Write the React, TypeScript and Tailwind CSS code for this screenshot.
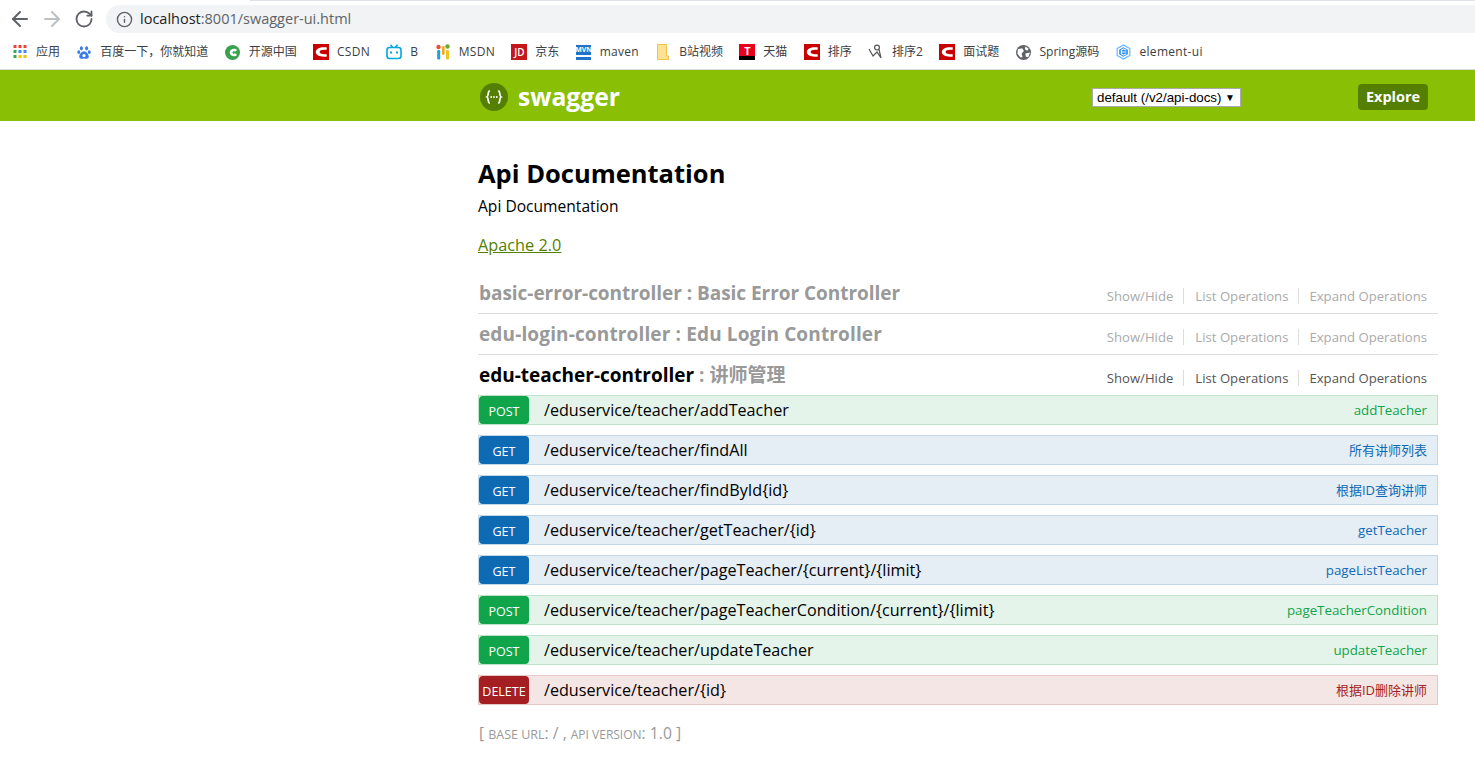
import { ArrowLeft, ArrowRight, Info, RotateCw } from "lucide-react";
import type { ReactNode } from "react";

const CsdnIcon = () => (
  <svg width="16" height="16" viewBox="0 0 16 16">
    <rect width="16" height="16" fill="#c90000" />
    <path d="M14 3.6 C8 2.6 2.8 4.6 2.8 8 C2.8 11.4 8 13.4 14 12.4 L13.4 10 C9.6 10.6 6.6 9.6 6.6 8 C6.6 6.4 9.6 5.4 13.4 6 Z" fill="#fff" />
  </svg>
);

const bookmarks: { label: string; icon: ReactNode }[] = [
  {
    label: "应用",
    icon: (
      <svg width="14" height="14" viewBox="0 0 14 14">
        <rect x="0.5" y="0" width="3" height="3" fill="#ea4335" />
        <rect x="5.5" y="0" width="3" height="3" fill="#ea4335" />
        <rect x="10.5" y="0" width="3" height="3" fill="#ea4335" />
        <rect x="0.5" y="5" width="3" height="3" fill="#34a853" />
        <rect x="5.5" y="5" width="3" height="3" fill="#4285f4" />
        <rect x="10.5" y="5" width="3" height="3" fill="#4285f4" />
        <rect x="0.5" y="10" width="3" height="3" fill="#34a853" />
        <rect x="5.5" y="10" width="3" height="3" fill="#fbbc04" />
        <rect x="10.5" y="10" width="3" height="3" fill="#fbbc04" />
      </svg>
    ),
  },
  {
    label: "百度一下，你就知道",
    icon: (
      <svg width="14" height="15" viewBox="0 0 16 16" fill="#3b7de8">
        <ellipse cx="5" cy="3.2" rx="1.7" ry="2.4" />
        <ellipse cx="11" cy="3.2" rx="1.7" ry="2.4" />
        <ellipse cx="2" cy="7.5" rx="1.7" ry="2.2" />
        <ellipse cx="14" cy="7.5" rx="1.7" ry="2.2" />
        <path d="M8 6.5 C5.5 6.5 2.5 10 2.5 12.8 C2.5 15.6 6 15.2 8 14.8 C10 15.2 13.5 15.6 13.5 12.8 C13.5 10 10.5 6.5 8 6.5 Z" />
        <circle cx="8" cy="11.5" r="1.8" fill="#fff" />
      </svg>
    ),
  },
  {
    label: "开源中国",
    icon: (
      <svg width="15" height="15" viewBox="0 0 16 16">
        <circle cx="8" cy="8" r="8" fill="#37a24b" />
        <path d="M13 5.4 C10.5 3 5 4 5 8 C5 12 10.5 13 13 10.6 L10.8 8.9 C9.6 9.8 8 9.4 8 8 C8 6.6 9.6 6.2 10.8 7.1 Z" fill="#fff" />
      </svg>
    ),
  },
  { label: "CSDN", icon: <CsdnIcon /> },
  {
    label: "B",
    icon: (
      <svg width="16" height="16" viewBox="0 0 16 16" fill="none" stroke="#00a8e0" strokeWidth="1.6">
        <rect x="1" y="3.5" width="14" height="11" rx="2.5" />
        <path d="M4.5 0.8 L6.5 3.2 M11.5 0.8 L9.5 3.2" />
        <path d="M5 7.5 V9.5 M11 7.5 V9.5" strokeWidth="2" />
      </svg>
    ),
  },
  {
    label: "MSDN",
    icon: (
      <svg width="14" height="16" viewBox="0 0 14 16">
        <circle cx="2.5" cy="3" r="2.2" fill="#e8503a" />
        <circle cx="11.5" cy="2.5" r="2.2" fill="#6aaa2d" />
        <rect x="1.2" y="6" width="3" height="9.5" rx="1.2" fill="#1ea0dc" />
        <rect x="6" y="2" width="2.6" height="9" rx="1.2" fill="#f3a81c" />
        <rect x="10" y="6" width="3" height="9.5" rx="1.2" fill="#f3c21c" />
      </svg>
    ),
  },
  {
    label: "京东",
    icon: (
      <div className="flex h-4 w-4 items-center justify-center bg-[#c4161c] text-[10px] font-semibold leading-none text-white">JD</div>
    ),
  },
  {
    label: "maven",
    icon: (
      <div className="flex h-[15px] w-[15px] flex-col">
        <div className="flex h-[10px] items-center justify-center bg-[#1f73c9] text-[7px] font-bold leading-none text-white">MVN</div>
        <div className="mt-[2px] h-[3px] bg-[#1f73c9]" />
      </div>
    ),
  },
  {
    label: "B站视频",
    icon: (
      <svg width="12" height="16" viewBox="0 0 12 16">
        <path d="M0.5 0.5 H9.5 V12 H11.5 V15.5 H0.5 Z" fill="#fde293" stroke="#f0c14b" />
      </svg>
    ),
  },
  {
    label: "天猫",
    icon: (
      <div className="flex h-4 w-4 flex-col bg-black">
        <div className="flex h-3 items-center justify-center bg-[#e8001c] text-[11px] font-bold leading-none text-white">T</div>
      </div>
    ),
  },
  { label: "排序", icon: <CsdnIcon /> },
  {
    label: "排序2",
    icon: (
      <svg width="16" height="16" viewBox="0 0 16 16" fill="none" stroke="#555" strokeWidth="1.2">
        <circle cx="9" cy="3.6" r="2.4" />
        <path d="M1 5 L5 12 L9 8 L13 14 L11 5.5" />
      </svg>
    ),
  },
  { label: "面试题", icon: <CsdnIcon /> },
  {
    label: "Spring源码",
    icon: (
      <svg width="15" height="15" viewBox="0 0 16 16">
        <circle cx="8" cy="8" r="8" fill="#5f6368" />
        <path d="M2 4.5 L6.5 3.5 L8.5 6.5 L6 9 L7 13 L4.5 13 L1.5 9 Z M10 1.5 L13.5 4 L12 6 L9.5 4.5 Z M10 9 L15 8 L13 13 L10.5 12.5 Z" fill="#fff" />
      </svg>
    ),
  },
  {
    label: "element-ui",
    icon: (
      <svg width="15" height="16" viewBox="0 0 16 17">
        <path d="M8 1 L14.8 4.8 V12.2 L8 16 L1.2 12.2 V4.8 Z" fill="#fff" stroke="#5cb4ff" strokeWidth="1.2" />
        <path d="M8 3.4 L12.6 6 V11 L8 13.6 L3.4 11 V6 Z" fill="#1f8ceb" />
        <path d="M11 6.6 L8 5.2 L5.6 6.6 V10.4 L8 11.8 L11 10.4 M6 8.5 H11" fill="none" stroke="#fff" strokeWidth="1.1" />
      </svg>
    ),
  },
];

const operations = [
  { method: "POST", path: "/eduservice/teacher/addTeacher", summary: "addTeacher" },
  { method: "GET", path: "/eduservice/teacher/findAll", summary: "所有讲师列表" },
  { method: "GET", path: "/eduservice/teacher/findById{id}", summary: "根据ID查询讲师" },
  { method: "GET", path: "/eduservice/teacher/getTeacher/{id}", summary: "getTeacher" },
  { method: "GET", path: "/eduservice/teacher/pageTeacher/{current}/{limit}", summary: "pageListTeacher" },
  { method: "POST", path: "/eduservice/teacher/pageTeacherCondition/{current}/{limit}", summary: "pageTeacherCondition" },
  { method: "POST", path: "/eduservice/teacher/updateTeacher", summary: "updateTeacher" },
  { method: "DELETE", path: "/eduservice/teacher/{id}", summary: "根据ID删除讲师" },
];

const methodStyles: Record<string, { row: string; badge: string; text: string }> = {
  POST: { row: "bg-[#e5f4ea] border-[#bfe3cc]", badge: "bg-[#10a54a]", text: "text-[#10a54a]" },
  GET: { row: "bg-[#e5edf5] border-[#c3d7e9]", badge: "bg-[#0f6ab4]", text: "text-[#0f6ab4]" },
  DELETE: { row: "bg-[#f5e6e6] border-[#e8c6c7]", badge: "bg-[#a41e22]", text: "text-[#a41e22]" },
};

const isLatin = (s: string) => /^[\x00-\x7f]+$/.test(s);

const Resource = ({ name, desc, active, spacing = "" }: { name: string; desc: string; active?: boolean; spacing?: string }) => {
  const linkColor = active ? "text-[#555555]" : "text-[#aaaaaa]";
  return (
    <div className={`flex items-center justify-between pl-px pr-[11px] ${active ? "h-[40px]" : "h-[41px] border-b border-[#dddddd]"}`}>
      <h2 className={`text-[19px] font-bold text-[#999999] ${spacing}`}>
        <span className={active ? "text-black" : ""}>{name}</span> : {desc}
      </h2>
      <div className={`mt-[6px] flex items-center text-[13.15px] ${linkColor}`}>
        <span className="border-r border-[#dddddd] pr-[10px] leading-[16px]">Show/Hide</span>
        <span className="border-r border-[#dddddd] pl-[11px] pr-[10px] leading-[16px]">List Operations</span>
        <span className="pl-[10px] leading-[16px]">Expand Operations</span>
      </div>
    </div>
  );
};

export default function App() {
  return (
    <div
      className="min-h-[781px] overflow-hidden bg-white text-black"
      style={{ fontFamily: '"Open Sans", "Noto Sans CJK SC", sans-serif' }}
    >
      <div className="ml-[250px] h-px bg-[#dee1e6]" />

      {/* browser toolbar */}
      <div className="flex h-[35px] items-center pl-[8px] pt-[1px]">
        <ArrowLeft size={24} strokeWidth={2} className="text-[#5f6368]" />
        <ArrowRight size={24} strokeWidth={2} className="ml-[8px] text-[#bdc1c6]" />
        <RotateCw size={20} strokeWidth={2.2} className="ml-[10px] text-[#5f6368]" />
        <div className="ml-[12px] flex h-[28px] flex-1 items-center rounded-l-full bg-[#f1f3f4] pl-[9.5px] text-[14.5px] text-[#5f6368]">
          <Info size={17} className="text-[#5f6368]" />
          <span className="ml-[7.5px]">
            <span className="text-[#202124]">localhost</span>:8001/swagger-ui.html
          </span>
        </div>
      </div>

      {/* bookmarks */}
      <div className="flex h-[34px] items-center gap-[16.3px] border-b border-[#dadce0] pb-px pl-[12px] text-[12px] text-[#3c4043]">
        {bookmarks.map((b) => (
          <div key={b.label} className="flex items-center gap-[8px]">
            <span className="flex h-4 w-4 items-center justify-center">{b.icon}</span>
            <span className={isLatin(b.label) ? "tracking-[0.3px]" : ""}>{b.label}</span>
          </div>
        ))}
      </div>

      {/* swagger header */}
      <div className="flex h-[51px] items-center bg-[#89bf04] pl-[480px] pt-[2px]">
        <svg width="28" height="28" viewBox="0 0 30 30">
          <circle cx="15" cy="15" r="15" fill="#547f00" />
          <path
            d="M10.5 8.5 C8 8.5 9.5 14 7.5 15 C9.5 16 8 21.5 10.5 21.5 M19.5 8.5 C22 8.5 20.5 14 22.5 15 C20.5 16 22 21.5 19.5 21.5"
            fill="none"
            stroke="#fff"
            strokeWidth="1.8"
          />
          <circle cx="12" cy="15" r="1" fill="#fff" />
          <circle cx="15" cy="15" r="1" fill="#fff" />
          <circle cx="18" cy="15" r="1" fill="#fff" />
        </svg>
        <span className="ml-[10px] text-[24.7px] font-bold text-white">swagger</span>
        <div className="ml-[472px] mt-[2px] flex h-[19px] w-[149px] items-center justify-between border border-[#aaaaaa] bg-white pl-[4px] pr-[5px] text-[13.33px] text-black [font-family:'Liberation_Sans',sans-serif]">
          <span>default (/v2/api-docs)</span>
          <span className="text-[10px]">▼</span>
        </div>
        <div className="ml-[117px] flex h-[26px] w-[70px] items-center justify-center rounded bg-[#547f00] text-[14.5px] font-bold text-white">
          Explore
        </div>
      </div>

      {/* content */}
      <main className="ml-[478px] w-[960px]">
        <h1 className="mt-[33px] text-[25.5px] font-bold leading-[38px]">Api Documentation</h1>
        <p className="mt-[4px] text-[15.6px] leading-[20px]">Api Documentation</p>
        <a className="mt-[18px] block text-[16.3px] leading-[22px] text-[#547f00] underline">Apache 2.0</a>

        <div className="mt-[17px]">
          <Resource name="basic-error-controller" desc="Basic Error Controller" spacing="tracking-[-0.04px]" />
          <Resource name="edu-login-controller" desc="Edu Login Controller" spacing="tracking-[0.14px]" />
          <Resource name="edu-teacher-controller" desc="讲师管理" active />
        </div>

        <ul className="flex flex-col gap-[10px]">
          {operations.map((op) => {
            const s = methodStyles[op.method];
            return (
              <li key={op.path} className={`flex h-[30px] items-center border ${s.row}`}>
                <span className={`flex h-[28px] w-[50px] items-center justify-center rounded-sm pt-[5px] text-[12.5px] text-white ${s.badge}`}>
                  {op.method}
                </span>
                <span className="ml-[15px] flex-1 text-[16.15px]">{op.path}</span>
                <span className={`mt-[2px] pr-[10px] ${isLatin(op.summary) ? "text-[13.3px]" : "text-[13px]"} ${s.text}`}>{op.summary}</span>
              </li>
            );
          })}
        </ul>

        <div className="mt-[17px] pl-px text-[15.7px] leading-[22px] text-[#999999]">
          [ <span className="text-[12.5px]">BASE URL</span>: / , <span className="text-[12px]">API VERSION</span>: 1.0 ]
        </div>
      </main>
    </div>
  );
}
